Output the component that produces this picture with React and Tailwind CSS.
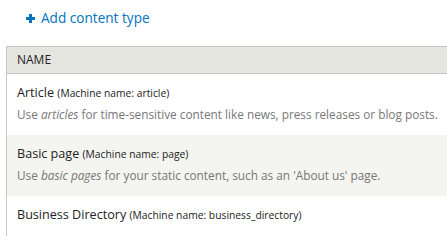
import React from "react";

const rows = [
  {
    name: "Article",
    machine: "article",
    desc: (
      <>
        Use <em>articles</em> for time-sensitive content like news, press releases or blog posts.
      </>
    ),
  },
  {
    name: "Basic page",
    machine: "page",
    desc: (
      <>
        Use <em>basic pages</em> for your static content, such as an 'About us' page.
      </>
    ),
  },
  {
    name: "Business Directory",
    machine: "business_directory",
    desc: null,
  },
];

export default function App() {
  return (
    <div
      className="w-[447px] h-[236px] overflow-hidden bg-white text-[#333]"
      style={{ fontFamily: '"Open Sans", sans-serif' }}
    >
      <div className="h-[46px] pl-[26px] pt-[9px]">
        <a className="flex items-center gap-[6px] text-[13.6px] leading-[18px] text-[#0074bd] whitespace-nowrap">
          <svg width="9" height="9" viewBox="0 0 9 9" className="shrink-0">
            <rect x="3" y="0" width="3" height="9" fill="#0074bd" />
            <rect x="0" y="3" width="9" height="3" fill="#0074bd" />
          </svg>
          <span>Add content type</span>
        </a>
      </div>
      <div className="ml-[6px] w-[460px] border-l border-t border-[#c9c9c4]">
        <div className="h-[27px] bg-[#e5e5e0] border-b border-[#c9c9c4] pl-[10px] flex items-center text-[12px] font-medium text-[#222]">
          NAME
        </div>
        {rows.map((r, i) => (
          <div
            key={r.name}
            className={`h-[61px] px-[10px] pt-[10px] whitespace-nowrap ${i % 2 === 1 ? "bg-[#f4f4f0]" : "bg-white"}`}
          >
            <div className="text-[12.6px] leading-[18px] text-[#222]">
              {r.name}{" "}
              <span className="text-[10.3px]">(Machine name: {r.machine})</span>
            </div>
            {r.desc && (
              <div className="mt-[4px] text-[11.8px] leading-[16px] text-[#777]">{r.desc}</div>
            )}
          </div>
        ))}
      </div>
    </div>
  );
}
